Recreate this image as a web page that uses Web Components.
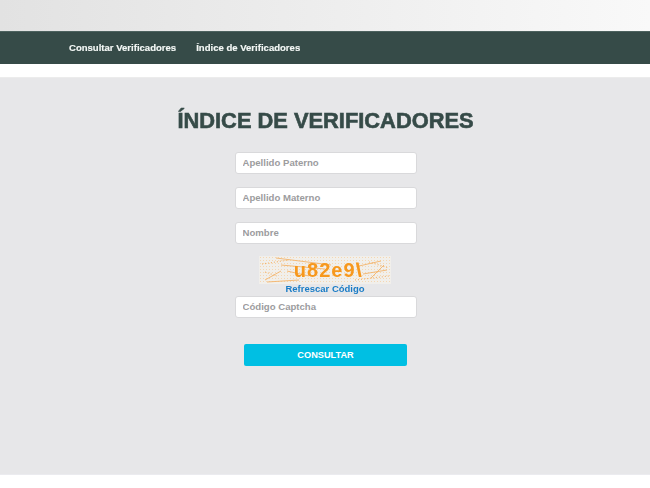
<!DOCTYPE html>
<html lang="es"><head><meta charset="utf-8"><title>Índice de Verificadores</title>
<style>html,body{margin:0;padding:0;background:#fff;font-family:"Liberation Sans",Arial,sans-serif}body{width:650px;height:488px;overflow:hidden}</style>
</head><body>
<vf-page>
  <vf-top></vf-top>
  <vf-nav><a>Consultar Verificadores</a><a>Índice de Verificadores</a></vf-nav>
  <vf-main>
    <vf-title>ÍNDICE DE VERIFICADORES</vf-title>
    <vf-input label="Apellido Paterno"></vf-input>
    <vf-input label="Apellido Materno"></vf-input>
    <vf-input label="Nombre"></vf-input>
    <vf-captcha></vf-captcha>
    <vf-input label="Código Captcha" class="last"></vf-input>
    <vf-button>CONSULTAR</vf-button>
  </vf-main>
</vf-page>
<script>
function def(name, html, init){
  customElements.define(name, class extends HTMLElement{
    constructor(){super();this.attachShadow({mode:'open'}).innerHTML=html;}
    connectedCallback(){if(init)init(this);}
  });
}
def('vf-page','<style>:host{display:flex;flex-direction:column;width:650px;height:488px}</style><slot></slot>');
def('vf-top','<style>:host{display:block;height:31px;background:linear-gradient(90deg,#e2e2e2,#f9f9f9)}</style>');
def('vf-nav',`<style>:host{display:flex;box-sizing:border-box;height:33px;margin-bottom:13px;padding:0 0 2px 69px;gap:20px;align-items:center;background:#364b48;border-top:1px solid #4d625f}
::slotted(a){color:#f4f8f6;font:bold 9.55px "Liberation Sans",Arial,sans-serif;-webkit-text-stroke:.15px #f4f8f6;white-space:nowrap;filter:blur(.25px)}</style><slot></slot>`);
def('vf-main','<style>:host{display:flex;flex-direction:column;align-items:center;box-sizing:border-box;height:398px;background:#e7e7e9;border-top:1px solid #ececec;border-bottom:1px solid #ebebef;padding-top:30px}</style><slot></slot>');
def('vf-title','<style>:host{display:block;height:44px;margin-left:1px;color:#364b48;font:bold 21.85px/26px "Liberation Sans",Arial,sans-serif;-webkit-text-stroke:.6px #364b48;white-space:nowrap;filter:blur(.25px)}</style><slot></slot>');
def('vf-input',`<style>:host{display:block;margin:0 0 13px 1px}
input{display:block;box-sizing:border-box;width:182px;height:22px;margin:0;padding:0 7px 1px 7px;background:#fff;border:1px solid #d9d9db;border-radius:3px;font:bold 9.6px "Liberation Sans",Arial,sans-serif;outline:0}
input::placeholder{color:#9c9c9e;opacity:1}</style><input type="text">`,el=>{el.shadowRoot.querySelector('input').placeholder=el.getAttribute('label');});
def('vf-captcha',`<style>:host{display:flex;flex-direction:column;align-items:center;margin:-1px 0 2px}
.c{position:relative;width:132px;height:28px;display:flex;justify-content:center;align-items:center;background:radial-gradient(circle,#f5d7b2 .6px,transparent .9px) 0 0/3px 3px,#f1efeb}
svg{position:absolute;inset:0}
b{position:relative;display:flex;font:bold 20px "Liberation Sans",sans-serif;letter-spacing:1px;color:#f7981d;margin-left:6px;filter:blur(.3px)}
i{font-style:normal;display:block;transform:skewX(12deg)}
a{font:bold 9.5px/11px "Liberation Sans",Arial,sans-serif;color:#1a7cc6;margin-top:-1px;filter:blur(.2px)}</style>
<div class="c"><svg width="132" height="28" fill="none" stroke="#f3b36b" stroke-width=".9"><path d="M17 2L72 9M22 9L66 13M28 15L50 20M6 24L22 15M100 10L122 5M104 18L128 14M112 22L125 9M8 26L40 24"/><path stroke-dasharray="1 2" stroke-width="1.2" d="M3 8L30 4M6 16L18 20M96 24L130 20M110 6L130 12"/></svg><b>u82e9<i>l</i></b></div><a>Refrescar Código</a>`);
def('vf-button',`<style>:host{display:flex;align-items:center;justify-content:center;box-sizing:border-box;width:163px;height:22px;margin-top:13px;margin-left:1px;background:#00bfe3;border-radius:2px;color:#fff;font:bold 9.2px "Liberation Sans",Arial,sans-serif}</style><slot></slot>`);
</script></body></html>
